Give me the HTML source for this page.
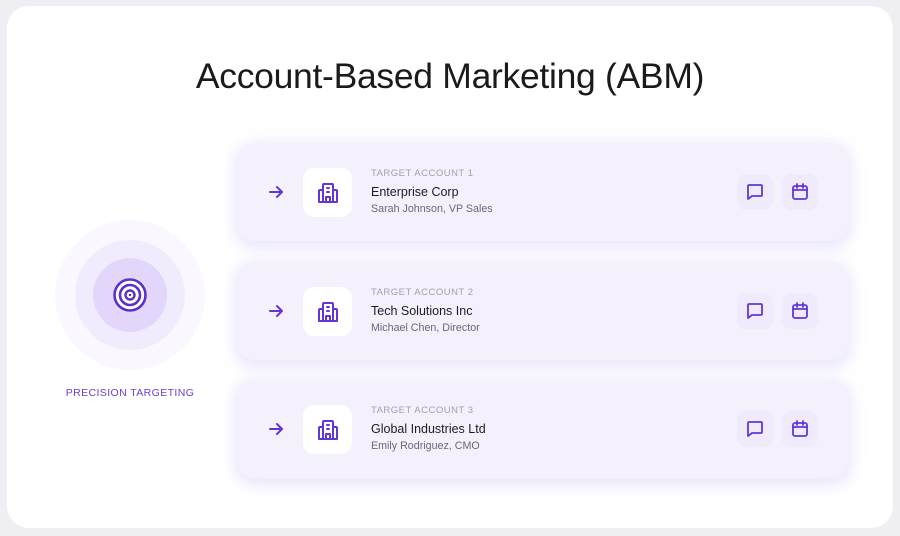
<!DOCTYPE html>
<html><head><style>
*{margin:0;padding:0;box-sizing:border-box}
body{width:900px;height:536px;background:#efeef3;font-family:"Liberation Sans",sans-serif;position:relative;overflow:hidden}
.card{position:absolute;left:7px;top:6px;width:886px;height:522px;background:#fff;border-radius:22px}
h1{position:absolute;left:0;width:900px;top:56px;text-align:center;font-weight:400;font-size:35.5px;color:#1a1a1a;letter-spacing:-0.3px}
.row{position:absolute;left:238px;width:610px;height:98px;background:#f4f1fd;border-radius:16px;box-shadow:0 4px 14px 4px rgba(200,185,245,.35)}
.arrow{position:absolute;left:30px;top:41px}
.ib{position:absolute;left:65px;top:25px;width:49px;height:49px;background:#fff;border-radius:11px;display:flex;align-items:center;justify-content:center}
.lab{position:absolute;left:133px;top:25px;font-size:9.5px;letter-spacing:.5px;color:#a3a0ad}
.nm{position:absolute;left:133px;top:42px;font-size:12.5px;color:#1c1c22}
.sub{position:absolute;left:133px;top:60px;font-size:10.7px;color:#6a6872}
.b{position:absolute;top:31px;width:36px;height:36px;border-radius:9px;background:#efeafc;display:flex;align-items:center;justify-content:center}
.c{position:absolute;border-radius:50%}
</style></head><body>
<div class="card"></div>
<h1>Account-Based Marketing (ABM)</h1>

<div class="c" style="left:55px;top:220px;width:150px;height:150px;background:#faf8fe"></div>
<div class="c" style="left:75px;top:240px;width:110px;height:110px;background:#f1ecfd"></div>
<div class="c" style="left:93px;top:258px;width:74px;height:74px;background:#e2d7fb"></div>
<svg style="position:absolute;left:111px;top:276px" width="38" height="38" viewBox="0 0 38 38"><circle cx="19" cy="19" r="17" fill="#fff"/><circle cx="19" cy="19" r="15.5" fill="none" stroke="#5b2fc9" stroke-width="2.6"/><circle cx="19" cy="19" r="10" fill="none" stroke="#5b2fc9" stroke-width="2.6"/><circle cx="19" cy="19" r="4.5" fill="none" stroke="#5b2fc9" stroke-width="2.4"/><circle cx="19" cy="19" r="1.2" fill="#5b2fc9"/></svg>
<div style="position:absolute;left:0;width:260px;top:387px;text-align:center;font-size:10.5px;letter-spacing:.4px;color:#6b3fd4">PRECISION TARGETING</div>

<div class="row" style="top:143px">
<svg class="arrow" width="16" height="16" viewBox="0 0 16 16" fill="none" stroke="#6236d6" stroke-width="2" stroke-linecap="round" stroke-linejoin="round"><path d="M2 8h12M9 3l5 5-5 5"/></svg>
<div class="ib"><svg width="24" height="24" viewBox="0 0 24 24" fill="none" stroke="#6236d6" stroke-width="2" stroke-linejoin="round" stroke-linecap="round"><path d="M7 21V4a1 1 0 0 1 1-1h8a1 1 0 0 1 1 1v17M7 9H4a1 1 0 0 0-1 1v11h18V10a1 1 0 0 0-1-1h-3M11 7h2M11 11h2M10 21v-5h4v5"/></svg></div>
<div class="lab">TARGET ACCOUNT 1</div><div class="nm">Enterprise Corp</div><div class="sub">Sarah Johnson, VP Sales</div>
<div class="b" style="left:499px"><svg width="20" height="20" viewBox="0 0 20 20" fill="none" stroke="#6236d6" stroke-width="1.8" stroke-linejoin="round"><path d="M3 4a1 1 0 0 1 1-1h12a1 1 0 0 1 1 1v9a1 1 0 0 1-1 1H7l-4 3z"/></svg></div>
<div class="b" style="left:544px"><svg width="20" height="20" viewBox="0 0 20 20" fill="none" stroke="#6236d6" stroke-width="1.8" stroke-linecap="round"><rect x="3" y="4" width="14" height="13" rx="2"/><path d="M3 8h14M7 2v4M13 2v4"/></svg></div>
</div>

<div class="row" style="top:262px">
<svg class="arrow" width="16" height="16" viewBox="0 0 16 16" fill="none" stroke="#6236d6" stroke-width="2" stroke-linecap="round" stroke-linejoin="round"><path d="M2 8h12M9 3l5 5-5 5"/></svg>
<div class="ib"><svg width="24" height="24" viewBox="0 0 24 24" fill="none" stroke="#6236d6" stroke-width="2" stroke-linejoin="round" stroke-linecap="round"><path d="M7 21V4a1 1 0 0 1 1-1h8a1 1 0 0 1 1 1v17M7 9H4a1 1 0 0 0-1 1v11h18V10a1 1 0 0 0-1-1h-3M11 7h2M11 11h2M10 21v-5h4v5"/></svg></div>
<div class="lab">TARGET ACCOUNT 2</div><div class="nm">Tech Solutions Inc</div><div class="sub">Michael Chen, Director</div>
<div class="b" style="left:499px"><svg width="20" height="20" viewBox="0 0 20 20" fill="none" stroke="#6236d6" stroke-width="1.8" stroke-linejoin="round"><path d="M3 4a1 1 0 0 1 1-1h12a1 1 0 0 1 1 1v9a1 1 0 0 1-1 1H7l-4 3z"/></svg></div>
<div class="b" style="left:544px"><svg width="20" height="20" viewBox="0 0 20 20" fill="none" stroke="#6236d6" stroke-width="1.8" stroke-linecap="round"><rect x="3" y="4" width="14" height="13" rx="2"/><path d="M3 8h14M7 2v4M13 2v4"/></svg></div>
</div>

<div class="row" style="top:380px">
<svg class="arrow" width="16" height="16" viewBox="0 0 16 16" fill="none" stroke="#6236d6" stroke-width="2" stroke-linecap="round" stroke-linejoin="round"><path d="M2 8h12M9 3l5 5-5 5"/></svg>
<div class="ib"><svg width="24" height="24" viewBox="0 0 24 24" fill="none" stroke="#6236d6" stroke-width="2" stroke-linejoin="round" stroke-linecap="round"><path d="M7 21V4a1 1 0 0 1 1-1h8a1 1 0 0 1 1 1v17M7 9H4a1 1 0 0 0-1 1v11h18V10a1 1 0 0 0-1-1h-3M11 7h2M11 11h2M10 21v-5h4v5"/></svg></div>
<div class="lab">TARGET ACCOUNT 3</div><div class="nm">Global Industries Ltd</div><div class="sub">Emily Rodriguez, CMO</div>
<div class="b" style="left:499px"><svg width="20" height="20" viewBox="0 0 20 20" fill="none" stroke="#6236d6" stroke-width="1.8" stroke-linejoin="round"><path d="M3 4a1 1 0 0 1 1-1h12a1 1 0 0 1 1 1v9a1 1 0 0 1-1 1H7l-4 3z"/></svg></div>
<div class="b" style="left:544px"><svg width="20" height="20" viewBox="0 0 20 20" fill="none" stroke="#6236d6" stroke-width="1.8" stroke-linecap="round"><rect x="3" y="4" width="14" height="13" rx="2"/><path d="M3 8h14M7 2v4M13 2v4"/></svg></div>
</div>
</body></html>
